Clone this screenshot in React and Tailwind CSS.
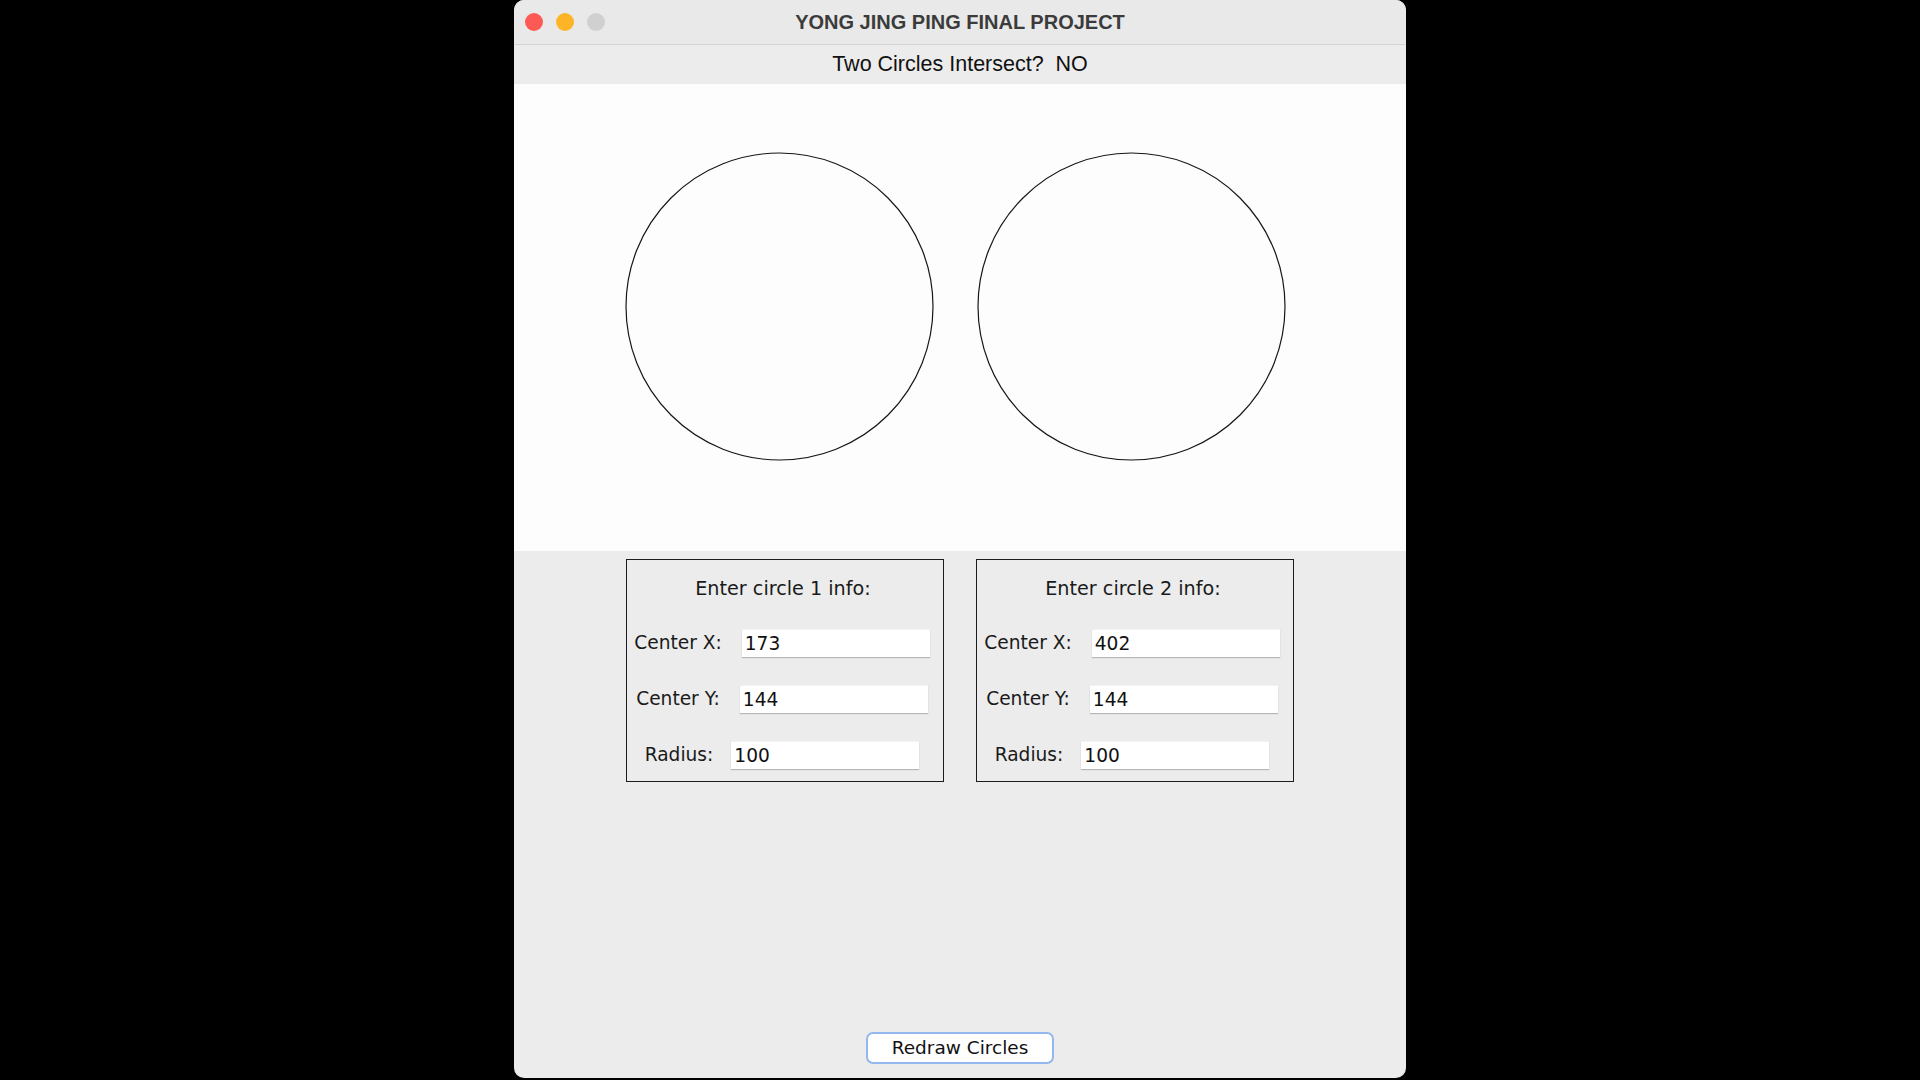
const panelFont = { fontFamily: '"DejaVu Sans", "Noto Sans", sans-serif' };

const Field = ({ label, value, gap = "gap-[20px]" }) => (
  <div className={`flex items-center justify-center h-[28px] pr-[6px] ${gap}`}>
    <span className="text-[18.6px] leading-6 text-[#1a1a1a]">{label}</span>
    <div className="w-[188px] h-[28px] bg-white pl-[3px] flex items-center text-[18.6px] leading-6 text-[#111] shadow-[0_1px_1px_rgba(0,0,0,0.22)] border-t border-t-[#f2f2f2]">
      {value}
    </div>
  </div>
);

const CirclePanel = ({ n, x, y, r }) => (
  <div className="w-[318px] h-[223px] border-[1.5px] border-[#1c1c1c] pt-[17px] flex flex-col items-center" style={panelFont}>
    <div className="text-[19.2px] leading-6 text-[#1a1a1a] pr-[4px]">Enter circle {n} info:</div>
    <div className="mt-7 flex flex-col gap-7 w-full">
      <Field label="Center X:" value={x} />
      <Field label="Center Y:" value={y} />
      <Field label="Radius:" value={r} gap="gap-[18px]" />
    </div>
  </div>
);

export default function App() {
  return (
    <div className="w-full h-[1080px] bg-black flex justify-center">
      <div className="w-[892px] h-[1078px] rounded-[10px] overflow-hidden bg-[#ececec] flex flex-col">
        {/* title bar */}
        <div className="h-[45px] border-b border-[#d4d4d4] bg-[#e9e9e9] flex items-center relative">
          <div className="flex items-center gap-[13px] pl-[11px]">
            <span className="w-[18px] h-[18px] rounded-full bg-[#fd5a55]" />
            <span className="w-[18px] h-[18px] rounded-full bg-[#fdb527]" />
            <span className="w-[18px] h-[18px] rounded-full bg-[#d0d0d0]" />
          </div>
          <div className="absolute inset-0 flex items-center justify-center pb-[1px] text-[20px] font-bold text-[#3b3b3b]" style={{ fontFamily: '"Liberation Sans", Arial, sans-serif' }}>
            YONG JING PING FINAL PROJECT
          </div>
        </div>

        {/* status */}
        <div className="h-[39px] flex items-center justify-center text-[21.5px] text-[#111]" style={{ fontFamily: '"Liberation Sans", Arial, sans-serif' }}>
          Two Circles Intersect?&nbsp;&nbsp;NO
        </div>

        {/* drawing canvas */}
        <div className="h-[467px] w-full bg-[#fdfdfd]">
          <svg width="892" height="467" viewBox="0 0 892 467">
            <circle cx="265.5" cy="222.5" r="153.5" fill="none" stroke="#161616" strokeWidth="1.2" />
            <circle cx="617.5" cy="222.5" r="153.5" fill="none" stroke="#161616" strokeWidth="1.2" />
          </svg>
        </div>

        {/* inputs */}
        <div className="flex-1 flex flex-col items-center pt-2 pb-[14px]">
          <div className="flex gap-8">
            <CirclePanel n={1} x="173" y="144" r="100" />
            <CirclePanel n={2} x="402" y="144" r="100" />
          </div>
          <div className="flex-1" />
          <button
            className="w-[188px] h-[32px] rounded-[7px] border-2 border-[#92b8ee] bg-white text-[18.5px] text-[#111] flex items-center justify-center"
            style={panelFont}
          >
            Redraw Circles
          </button>
        </div>
      </div>
    </div>
  );
}
